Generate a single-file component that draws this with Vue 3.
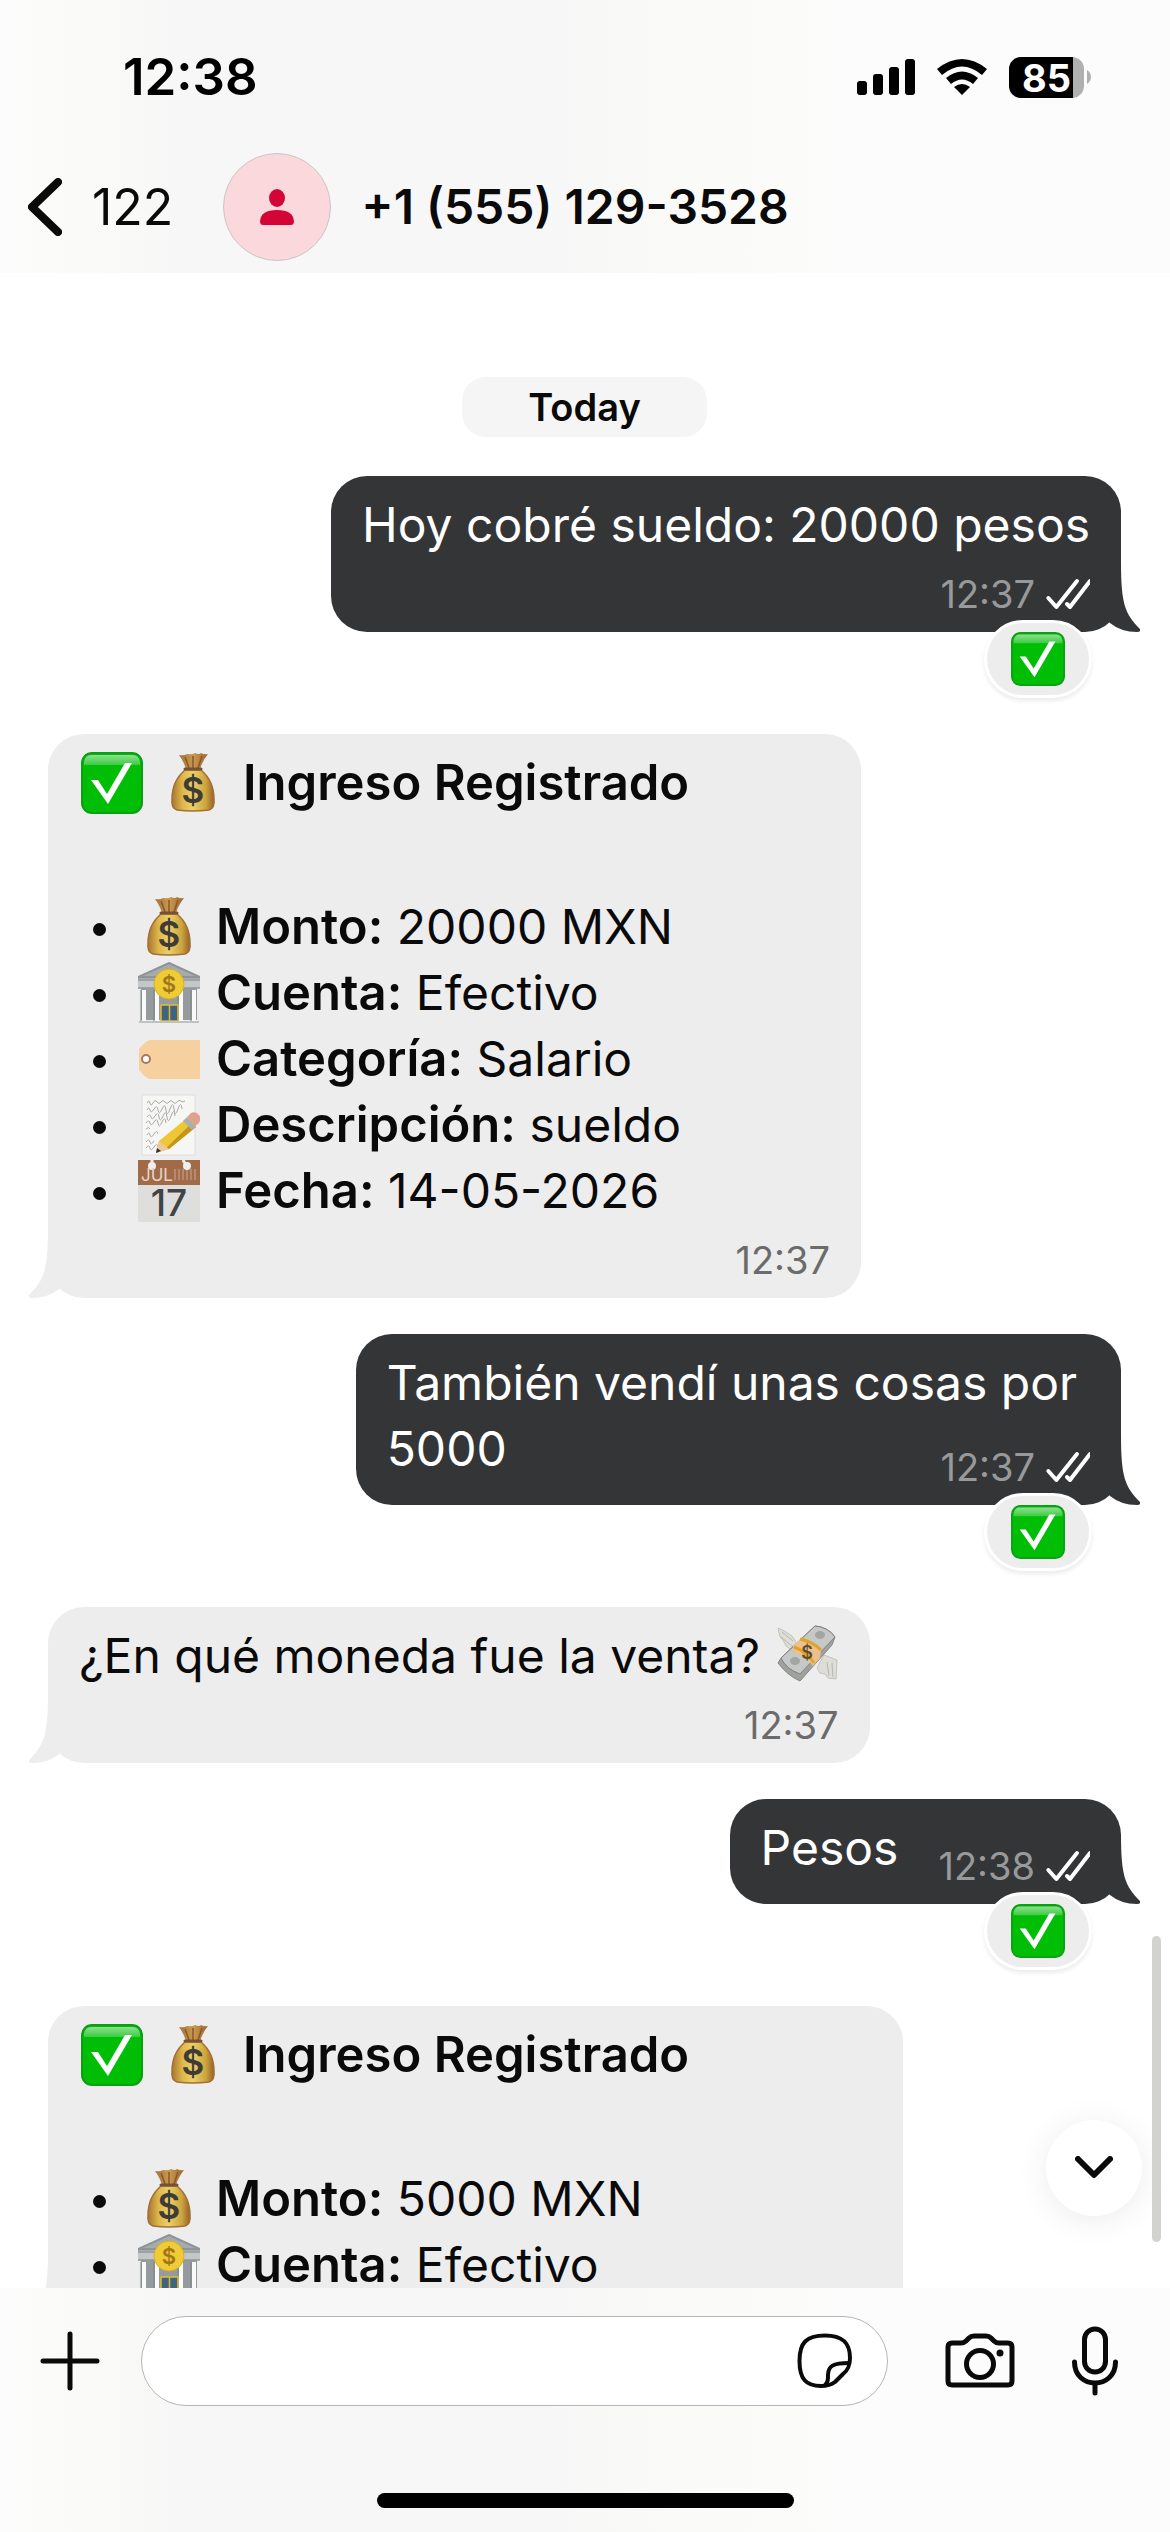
<template>
  <div class="chatPage">
    <!-- 表情与图标定义 -->
    <svg class="defs" aria-hidden="true">
      <defs>
        <linearGradient id="bagFill" x1="0" y1="0" x2="1" y2="0">
          <stop offset="0" stop-color="#a9752f" />
          <stop offset="0.25" stop-color="#dcb74c" />
          <stop offset="0.5" stop-color="#ecd067" />
          <stop offset="0.8" stop-color="#cda53c" />
          <stop offset="1" stop-color="#94602b" />
        </linearGradient>
        <linearGradient id="bagTop" x1="0" y1="0" x2="1" y2="0">
          <stop offset="0" stop-color="#a4713c" />
          <stop offset="0.5" stop-color="#c99a4c" />
          <stop offset="1" stop-color="#9a6332" />
        </linearGradient>
        <linearGradient id="gloss" x1="0" y1="0" x2="0" y2="1">
          <stop offset="0" stop-color="#8be08f" />
          <stop offset="1" stop-color="#3ccb41" />
        </linearGradient>
      </defs>
      <symbol id="check" viewBox="0 0 62 62">
        <rect x="1" y="1" width="60" height="60" rx="10" fill="#00bd06" stroke="#0d9f13" stroke-width="2" />
        <path d="M10 3h42q6 0 7 7v3H3v-3q1-7 7-7z" fill="url(#gloss)" />
        <path d="M10 28h7l9 14 18-31h7L27 52z" fill="#fff" />
      </symbol>
      <symbol id="bag" viewBox="0 0 62 62">
        <path d="M17 3q5 1 8-1 5 1 8-1 4 2 6 0 4 2 7 1-5 6-8 15H24Q21 8 17 3z" fill="url(#bagTop)" />
        <path d="M23 5l4 11M31 4v12M40 4l-4 12" stroke="#89572b" stroke-width="1.5" fill="none" />
        <path d="M23 18h16q13 11 13 29 1 9-5 11-16 2-32 0-6-2-5-11 0-18 13-29z" fill="url(#bagFill)" stroke="#a56f34" stroke-width="1.5" />
        <path d="M23 17h16" stroke="#765038" stroke-width="3" stroke-linecap="round" />
      </symbol>
      <symbol id="bank" viewBox="0 0 62 62">
        <path d="M31 1L62 15v5H0v-5z" fill="#a5abad" />
        <path d="M31 1L62 15H0z" fill="none" stroke="#8d9497" stroke-width="2" />
        <path d="M3 20h56v38H3z" fill="#969c9e" />
        <path d="M0 17h62v9H0z" fill="#c4c7c8" />
        <path d="M0 18h62M0 26h62" stroke="#92989a" stroke-width="1.5" />
        <path d="M6 28v31M19 28v31M43 28v31M56 28v31" stroke="#fafafa" stroke-width="4" />
        <path d="M3 28v31M16 28v31M40 28v31M53 28v31" stroke="#7d8385" stroke-width="1" />
        <path d="M23 43h17v16H23z" fill="#3f6480" stroke="#e5b933" stroke-width="1.5" />
        <path d="M31.500 43v16" stroke="#e5b933" stroke-width="1.5" />
        <path d="M1 60h60" stroke="#bfc2c2" stroke-width="2" />
        <circle cx="31" cy="22" r="15" fill="#efcb35" stroke="#d9ae27" />
      </symbol>
      <symbol id="tag" viewBox="0 0 62 62">
        <path d="M13 12h49v39H13Q8 51 1 42V21q7-9 12-9z" fill="#f7d0a0" />
        <circle cx="8" cy="31" r="4" fill="#fff" stroke="#a9795b" stroke-width="2" />
      </symbol>
      <symbol id="memo" viewBox="0 0 62 62">
        <path d="M4 1h53v60H4z" fill="#f6f6f5" stroke="#dedede" />
        <path
          d="M9 9q2-4 3 0t3 0 4-1 4 0 4 0 4 0 4 0 4 0 4-1 4 0M9 16q2-4 3 0t4-1 4 1 4-1 4 1 4-1 4 0 4 0 4 0M9 23q3-4 4 0t4-1 4 1 4-1 4 1 4-1 4 0M8 29q3-4 4 0t4-1 4 1 4-1 4 1M8 35q3-3 4 0M9 41q2-4 3 0t4-1 4 0M8 48q3-4 4 0t4-1M8 54q3-4 4 0t4-1 4 0"
          fill="none"
          stroke="#aaa"
          stroke-width="1"
        />
        <path d="M18 59l3-12 28-23 9 9-27 22z" fill="#eec736" />
        <path d="M27 55l27-26 4 4-27 22z" fill="#c4941b" />
        <path d="M18 59l3-12 10 8z" fill="#ecc79d" />
        <path d="M18 59l1-5 4 3z" fill="#333" />
        <path d="M45 27l4-4 9 9-4 4z" fill="#aab0b2" />
        <path d="M49 23l4-4q5-2 8 2t-1 9l-3 2z" fill="#dfa28a" />
      </symbol>
      <symbol id="calendar" viewBox="0 0 62 62">
        <path d="M0 24h62v38H0z" fill="#dededc" />
        <path d="M0 0h62v25H0z" fill="#a26b47" />
        <path d="M37 20V9M41 20V9M45 20V9M49 20V9M53 20V9M57 20V9" stroke="#b88a6d" stroke-width="2" />
        <path d="M14 0v5M45 0l3 5" stroke="#eee" stroke-width="3" />
        <circle cx="14" cy="6" r="4" fill="#eee" />
        <circle cx="49" cy="6" r="4" fill="#eee" />
      </symbol>
      <symbol id="money" viewBox="0 0 62 62">
        <path d="M1 5q6 2 14 8l6 9-5 6-7-5-3-6-3-3z" fill="#dfddd8" stroke="#c4c2bd" />
        <path d="M47 32l13 5-1 19-8-1-3-4-5-1-3-5z" fill="#dfddd8" stroke="#c4c2bd" />
        <path d="M5 9l11 9M4 14l12 10M50 39l2 14M55 40l1 14" stroke="#b8b6b1" fill="none" />
        <path d="M38 3q13 1 20 11l-3 8-32 36Q11 53 1 40l3-5z" fill="#9fa19f" stroke="#868886" />
        <path d="M38 3q13 1 20 11L23 51Q9 46 4 35z" fill="#c6c8c5" stroke="#7d807d" />
        <ellipse cx="43" cy="12" rx="5" ry="4" fill="#a2a5a2" />
        <ellipse cx="18" cy="38" rx="5" ry="4" fill="#a2a5a2" />
        <path d="M23 16q13 3 21 11l-1 8-7 8q-7-10-20-14v-6z" fill="#eac18c" />
        <path d="M23 16q13 3 21 11M17 24q12 4 20 16" stroke="#e3a127" stroke-width="3" fill="none" />
      </symbol>
      <symbol id="ticks" viewBox="1036 208 144 96">
        <path
          d="M1046 268l24 27 62-78M1102 286l9 9 60-78"
          fill="none"
          stroke="#fff"
          stroke-width="12"
          stroke-linecap="round"
          stroke-linejoin="round"
        />
      </symbol>
    </svg>

    <header class="header">
      <div class="statusBar">
        <span class="clock">12:38</span>
        <div class="statusIcons">
          <svg width="58" height="36" viewBox="0 0 58 36" aria-label="Signal">
            <rect x="0" y="22" width="10" height="14" rx="3" />
            <rect x="16" y="15" width="10" height="21" rx="3" />
            <rect x="32" y="8" width="10" height="28" rx="3" />
            <rect x="48" y="0" width="10" height="36" rx="3" />
          </svg>
          <svg width="50" height="36" viewBox="0 0 50 36" aria-label="Wi-Fi">
            <path d="M0 10Q25-10 50 10l-5 6Q25-1 5 16z" />
            <path d="M9 19Q25 6 41 19l-5 6Q25 16 14 25z" />
            <path d="M17 28q8-6 16 0l-8 8z" />
          </svg>
          <div class="battery">
            <div class="batteryBody"><span>85</span></div>
            <svg width="4" height="14" viewBox="0 0 4 14"><path d="M0 0q4 3 4 7t-4 7z" fill="#b0b0b0" /></svg>
          </div>
        </div>
      </div>
      <div class="navBar">
        <button class="back" type="button" aria-label="Back">
          <svg width="34" height="58" viewBox="0 0 34 58">
            <path d="M30 4L4 29l26 25" class="backStroke" />
          </svg>
          <span>122</span>
        </button>
        <div class="avatar">
          <svg width="34" height="36" viewBox="0 0 34 36">
            <ellipse cx="17" cy="9" rx="8" ry="9" />
            <path d="M0 32q1-11 17-11t17 11q0 4-3 4H3q-3 0-3-4z" />
          </svg>
        </div>
        <h1 class="title">+1 (555) 129-3528</h1>
      </div>
    </header>

    <main class="chat">
      <div class="day">Today</div>
      <div v-for="msg in messages" :key="msg.id" class="message" :class="msg.from">
        <div class="bubble" :class="[msg.metaPlace, msg.size]">
          <div class="body">
            <template v-if="msg.heading">
              <div class="heading">
                <svg class="emoji"><use href="#check" /></svg>
                <svg class="emoji">
                  <use href="#bag" />
                  <text v-for="mark in marks.bag" :key="mark.name" :x="mark.x" :y="mark.y" :class="mark.name">{{ mark.text }}</text>
                </svg>
                <strong>{{ msg.heading }}</strong>
              </div>
              <ul class="details">
                <li v-for="row in msg.rows" :key="row.label">
                  <svg class="emoji">
                    <use :href="'#' + row.icon" />
                    <text v-for="mark in marks[row.icon]" :key="mark.name" :x="mark.x" :y="mark.y" :class="mark.name">{{ mark.text }}</text>
                  </svg>
                  <span><strong>{{ row.label }}:</strong> {{ row.value }}</span>
                </li>
              </ul>
            </template>
            <p v-else>{{ msg.text }}<template v-if="msg.emoji">{{ ' ' }}<svg class="emoji inline"><use :href="'#' + msg.emoji" /><text v-for="mark in marks[msg.emoji]" :key="mark.name" :x="mark.x" :y="mark.y" :class="mark.name">{{ mark.text }}</text></svg></template></p>
          </div>
          <div v-if="msg.time" class="meta">
            <time>{{ msg.time }}</time>
            <svg v-if="msg.from === 'sent'" class="ticks"><use href="#ticks" /></svg>
          </div>
          <svg class="tail" viewBox="0 0 50 70">
            <path d="M31 0C31 42 35 52 50 67Q51 70 47 70 31 70 20 61L0 40V0z" />
          </svg>
        </div>
        <button v-if="msg.reaction" class="reaction" type="button" aria-label="Reaction">
          <svg><use :href="'#' + msg.reaction" /></svg>
        </button>
      </div>
      <button class="toBottom" type="button" aria-label="Scroll to bottom">
        <svg width="38" height="24" viewBox="0 0 38 24">
          <path d="M3 3l16 16L35 3" />
        </svg>
      </button>
      <div class="scrollThumb"></div>
    </main>

    <footer class="footer">
      <div class="composer">
        <button class="iconBtn" type="button" aria-label="Add">
          <svg width="60" height="60" viewBox="0 0 60 60">
            <path d="M30 3v54M3 30h54" />
          </svg>
        </button>
        <div class="field">
          <input v-model="draft" type="text" aria-label="Message" />
          <button class="iconBtn" type="button" aria-label="Stickers">
            <svg width="56" height="56" viewBox="0 0 56 56" class="thin">
              <path d="M28 2.500C45 2.500 53 9 53 25C53 33 51 37 46 41L38 49C34 52 30 53 24 53C9 53 2.500 46 2.500 28S9 2.500 28 2.500z" />
              <path d="M52 30C36 30 31 33 31 42C31 47 31 49 28 52" />
            </svg>
          </button>
        </div>
        <button class="iconBtn" type="button" aria-label="Camera">
          <svg width="70" height="56" viewBox="0 0 70 56">
            <path d="M7 10h9q3 0 5-2l3-3q2-2 5-2h12q3 0 5 2l3 3q2 2 5 2h9q4 0 4 4v34q0 4-4 4H7q-4 0-4-4V14q0-4 4-4z" />
            <circle cx="35" cy="31" r="13.500" />
            <circle cx="55" cy="20" r="3.500" class="solid" />
          </svg>
        </button>
        <button class="iconBtn" type="button" aria-label="Record">
          <svg width="46" height="70" viewBox="0 0 46 70">
            <rect x="12.500" y="3" width="21" height="43" rx="10.500" />
            <path d="M2.500 36c0 28 41 28 41 0M23 57v10" />
          </svg>
        </button>
      </div>
      <div class="homeBar"></div>
    </footer>
  </div>
</template>

<script setup>
import { ref } from 'vue'

const draft = ref('')

// 表情上的文字
const marks = {
  bag: [{ name: 'bagSign', text: '$', x: 31, y: 51 }],
  bank: [{ name: 'coinSign', text: '$', x: 31, y: 30 }],
  calendar: [
    { name: 'calMonth', text: 'JUL', x: 3, y: 21 },
    { name: 'calDay', text: '17', x: 31, y: 56 }
  ],
  money: [{ name: 'noteSign', text: '$', x: 30, y: 36 }]
}

// 消息列表
const messages = [
  {
    id: 1,
    from: 'sent',
    text: 'Hoy cobré sueldo: 20000 pesos',
    time: '12:37',
    metaPlace: 'below',
    reaction: 'check'
  },
  {
    id: 2,
    from: 'received',
    heading: 'Ingreso Registrado',
    rows: [
      { icon: 'bag', label: 'Monto', value: '20000 MXN' },
      { icon: 'bank', label: 'Cuenta', value: 'Efectivo' },
      { icon: 'tag', label: 'Categoría', value: 'Salario' },
      { icon: 'memo', label: 'Descripción', value: 'sueldo' },
      { icon: 'calendar', label: 'Fecha', value: '14-05-2026' }
    ],
    time: '12:37',
    metaPlace: 'below',
    size: 'card'
  },
  {
    id: 3,
    from: 'sent',
    text: 'También vendí unas cosas por\n5000',
    time: '12:37',
    metaPlace: 'lastLine',
    reaction: 'check'
  },
  {
    id: 4,
    from: 'received',
    text: '¿En qué moneda fue la venta?',
    emoji: 'money',
    time: '12:37',
    metaPlace: 'below'
  },
  {
    id: 5,
    from: 'sent',
    text: 'Pesos',
    time: '12:38',
    metaPlace: 'beside',
    reaction: 'check'
  },
  {
    id: 6,
    from: 'received',
    heading: 'Ingreso Registrado',
    rows: [
      { icon: 'bag', label: 'Monto', value: '5000 MXN' },
      { icon: 'bank', label: 'Cuenta', value: 'Efectivo' }
    ],
    metaPlace: 'below',
    size: 'cardWide'
  }
]
</script>

<style>
body {
  background: #fff;
}
</style>

<style scoped>
  .chatPage {
    display: flex;
    flex-direction: column;
    height: 100vh;
    overflow: hidden;
    font-family: Inter, "Liberation Sans", sans-serif;
    font-size: 48px;
    line-height: 66px;
    color: #0a0a0a;
    background: #fff;
  }
  .chatPage * {
    box-sizing: border-box;
  }
  .defs {
    position: absolute;
    width: 0;
    height: 0;
  }
  svg {
    display: block;
    flex: none;
  }
  button {
    padding: 0;
    border: none;
    background: none;
    font: inherit;
    color: inherit;
  }
  strong {
    font-size: 49px;
    font-weight: 600;
  }

  /* 顶部 */
  .header {
    flex: none;
    background: linear-gradient(90deg, #fcfcfc 0, #fafaf8 8%, #f7f7f7 16%, #f7f7f7 46%, #fafaf8 60%, #fcfcfc 74%);
  }
  .statusBar {
    display: flex;
    justify-content: space-between;
    align-items: center;
    height: 136px;
    padding: 18px 79px 0 123px;
  }
  .clock {
    font-size: 51px;
    font-weight: 600;
    color: #000;
  }
  .statusIcons {
    display: flex;
    align-items: center;
    gap: 22px;
  }
  .battery {
    display: flex;
    align-items: center;
    gap: 3px;
  }
  .batteryBody {
    width: 75px;
    height: 41px;
    padding-left: 13px;
    border-radius: 12px;
    background: linear-gradient(90deg, #000 64px, #b0b0b0 64px);
    color: #fff;
    font-size: 38px;
    font-weight: 700;
    line-height: 42px;
  }
  .navBar {
    display: flex;
    align-items: center;
    height: 137px;
    padding: 4px 28px 0;
  }
  .back {
    display: flex;
    align-items: center;
    gap: 30px;
    font-size: 50px;
  }
  .backStroke {
    fill: none;
    stroke: #0a0a0a;
    stroke-width: 8;
    stroke-linecap: round;
    stroke-linejoin: round;
  }
  .avatar {
    display: flex;
    justify-content: center;
    align-items: center;
    width: 108px;
    height: 108px;
    margin: 0 30px 0 50px;
    border: 1px solid #cfc4c5;
    border-radius: 50%;
    background: #fad8dc;
    fill: #d30537;
  }
  .title {
    margin: 0;
    font-size: 48px;
    font-weight: 600;
  }

  /* 消息区 */
  .chat {
    position: relative;
    flex: 1;
    min-height: 0;
    overflow: hidden;
    display: flex;
    flex-direction: column;
    gap: 36px;
    padding: 104px 49px 0 48px;
  }
  .day {
    flex: none;
    align-self: center;
    margin-bottom: 3px;
    padding: 0 66px;
    border-radius: 24px;
    background: #f5f5f5;
    font-size: 38px;
    font-weight: 600;
    line-height: 60px;
  }
  .message {
    flex: none;
    display: flex;
    flex-direction: column;
    align-items: flex-start;
  }
  .message.sent {
    align-items: flex-end;
  }
  .bubble {
    position: relative;
    display: grid;
    padding: 16px 31px 23px;
    border-radius: 36px;
    background: #ededed;
  }
  .sent .bubble {
    background: #343537;
    color: #fff;
  }
  .card {
    min-width: 813px;
  }
  .cardWide {
    min-width: 855px;
  }
  .body {
    grid-area: 1 / 1;
  }
  .body p {
    margin: 0;
    white-space: pre-line;
  }
  .lastLine .body {
    padding-right: 13px;
  }
  .heading {
    display: flex;
    align-items: center;
    gap: 19px;
    margin-bottom: 78px;
    padding-left: 2px;
  }
  .emoji {
    width: 62px;
    height: 62px;
  }
  .emoji.inline {
    display: inline-block;
    vertical-align: -12px;
    margin-left: 3px;
  }
  .details {
    margin: 0;
    padding: 0 0 0 14px;
    list-style: none;
  }
  .details li {
    display: flex;
    align-items: center;
    height: 66px;
  }
  .details li::before {
    content: "";
    width: 13px;
    height: 13px;
    margin: 5px 32px 0 0;
    border-radius: 50%;
    background: #0a0a0a;
  }
  .details .emoji {
    margin-right: 16px;
  }
  .meta {
    display: flex;
    align-items: center;
    align-self: end;
    justify-self: end;
    gap: 10px;
    margin-bottom: -7px;
    color: #6b6b6b;
    font-size: 38px;
    line-height: 44px;
  }
  .sent .meta {
    margin-right: -3px;
    color: #98999a;
  }
  .below .meta {
    grid-area: 2 / 1;
    margin-top: 14px;
  }
  .lastLine .meta {
    grid-area: 1 / 1;
  }
  .beside .meta {
    grid-area: 1 / 2;
    margin-left: 40px;
  }
  .ticks {
    width: 48px;
    height: 32px;
  }
  .tail {
    position: absolute;
    right: -19px;
    bottom: 0;
    width: 50px;
    height: 70px;
    fill: #343537;
  }
  .received .tail {
    right: auto;
    left: -19px;
    transform: scaleX(-1);
    fill: #ededed;
  }
  .reaction {
    position: relative;
    display: flex;
    justify-content: center;
    align-items: center;
    width: 108px;
    height: 78px;
    margin: -12px 29px 0 0;
    border: 3px solid #fff;
    border-radius: 40px;
    background: #ededed;
    box-shadow: 0 3px 4px rgba(0, 0, 0, 0.08);
  }
  .reaction svg {
    width: 54px;
    height: 54px;
  }
  .toBottom {
    position: absolute;
    right: 28px;
    bottom: 72px;
    display: flex;
    justify-content: center;
    align-items: center;
    width: 96px;
    height: 96px;
    border-radius: 50%;
    background: #fff;
    box-shadow: 0 4px 32px rgba(0, 0, 0, 0.08);
  }
  .toBottom path {
    fill: none;
    stroke: #0a0a0a;
    stroke-width: 6;
    stroke-linecap: round;
    stroke-linejoin: round;
  }
  .scrollThumb {
    position: absolute;
    right: 9px;
    bottom: 46px;
    width: 9px;
    height: 306px;
    border-radius: 5px;
    background: #d2d2d0;
  }

  /* 底部输入栏 */
  .footer {
    flex: none;
    display: flex;
    flex-direction: column;
    align-items: center;
    padding: 28px 0 24px;
    background: linear-gradient(90deg, #fcfcfc 0, #fafaf8 8%, #f7f7f7 16%, #f7f7f7 46%, #fafaf8 60%, #fcfcfc 74%);
  }
  .composer {
    display: flex;
    align-items: center;
    align-self: stretch;
    gap: 57px;
    margin-bottom: 87px;
    padding: 0 52px 0 40px;
  }
  .field {
    flex: 1;
    display: flex;
    align-items: center;
    min-width: 0;
    height: 90px;
    margin-left: -16px;
    padding: 0 34px 0 40px;
    border: 1px solid #b5b5b5;
    border-radius: 45px;
    background: #fff;
  }
  .field input {
    flex: 1;
    min-width: 0;
    height: 66px;
    padding: 0;
    border: none;
    outline: none;
    background: none;
    font: inherit;
  }
  .iconBtn svg {
    fill: none;
    stroke: #0a0a0a;
    stroke-width: 5;
    stroke-linecap: round;
    stroke-linejoin: round;
  }
  .iconBtn .thin {
    stroke-width: 4;
  }
  .iconBtn .solid {
    fill: #0a0a0a;
    stroke: none;
  }
  .homeBar {
    width: 417px;
    height: 15px;
    border-radius: 8px;
    background: #000;
  }

  /* 表情内的文字 */
  .emoji text {
    text-anchor: middle;
    font-weight: 600;
  }
  .emoji .bagSign {
    font-size: 35px;
    fill: #3f3c36;
  }
  .emoji .coinSign {
    font-size: 22px;
    fill: #a0741a;
  }
  .emoji .calMonth {
    font-size: 17px;
    font-weight: 400;
    text-anchor: start;
    fill: #e6d5ca;
  }
  .emoji .calDay {
    font-size: 37px;
    font-weight: 500;
    fill: #414447;
  }
  .emoji .noteSign {
    font-size: 18px;
    fill: #5f4c2c;
  }
</style>
